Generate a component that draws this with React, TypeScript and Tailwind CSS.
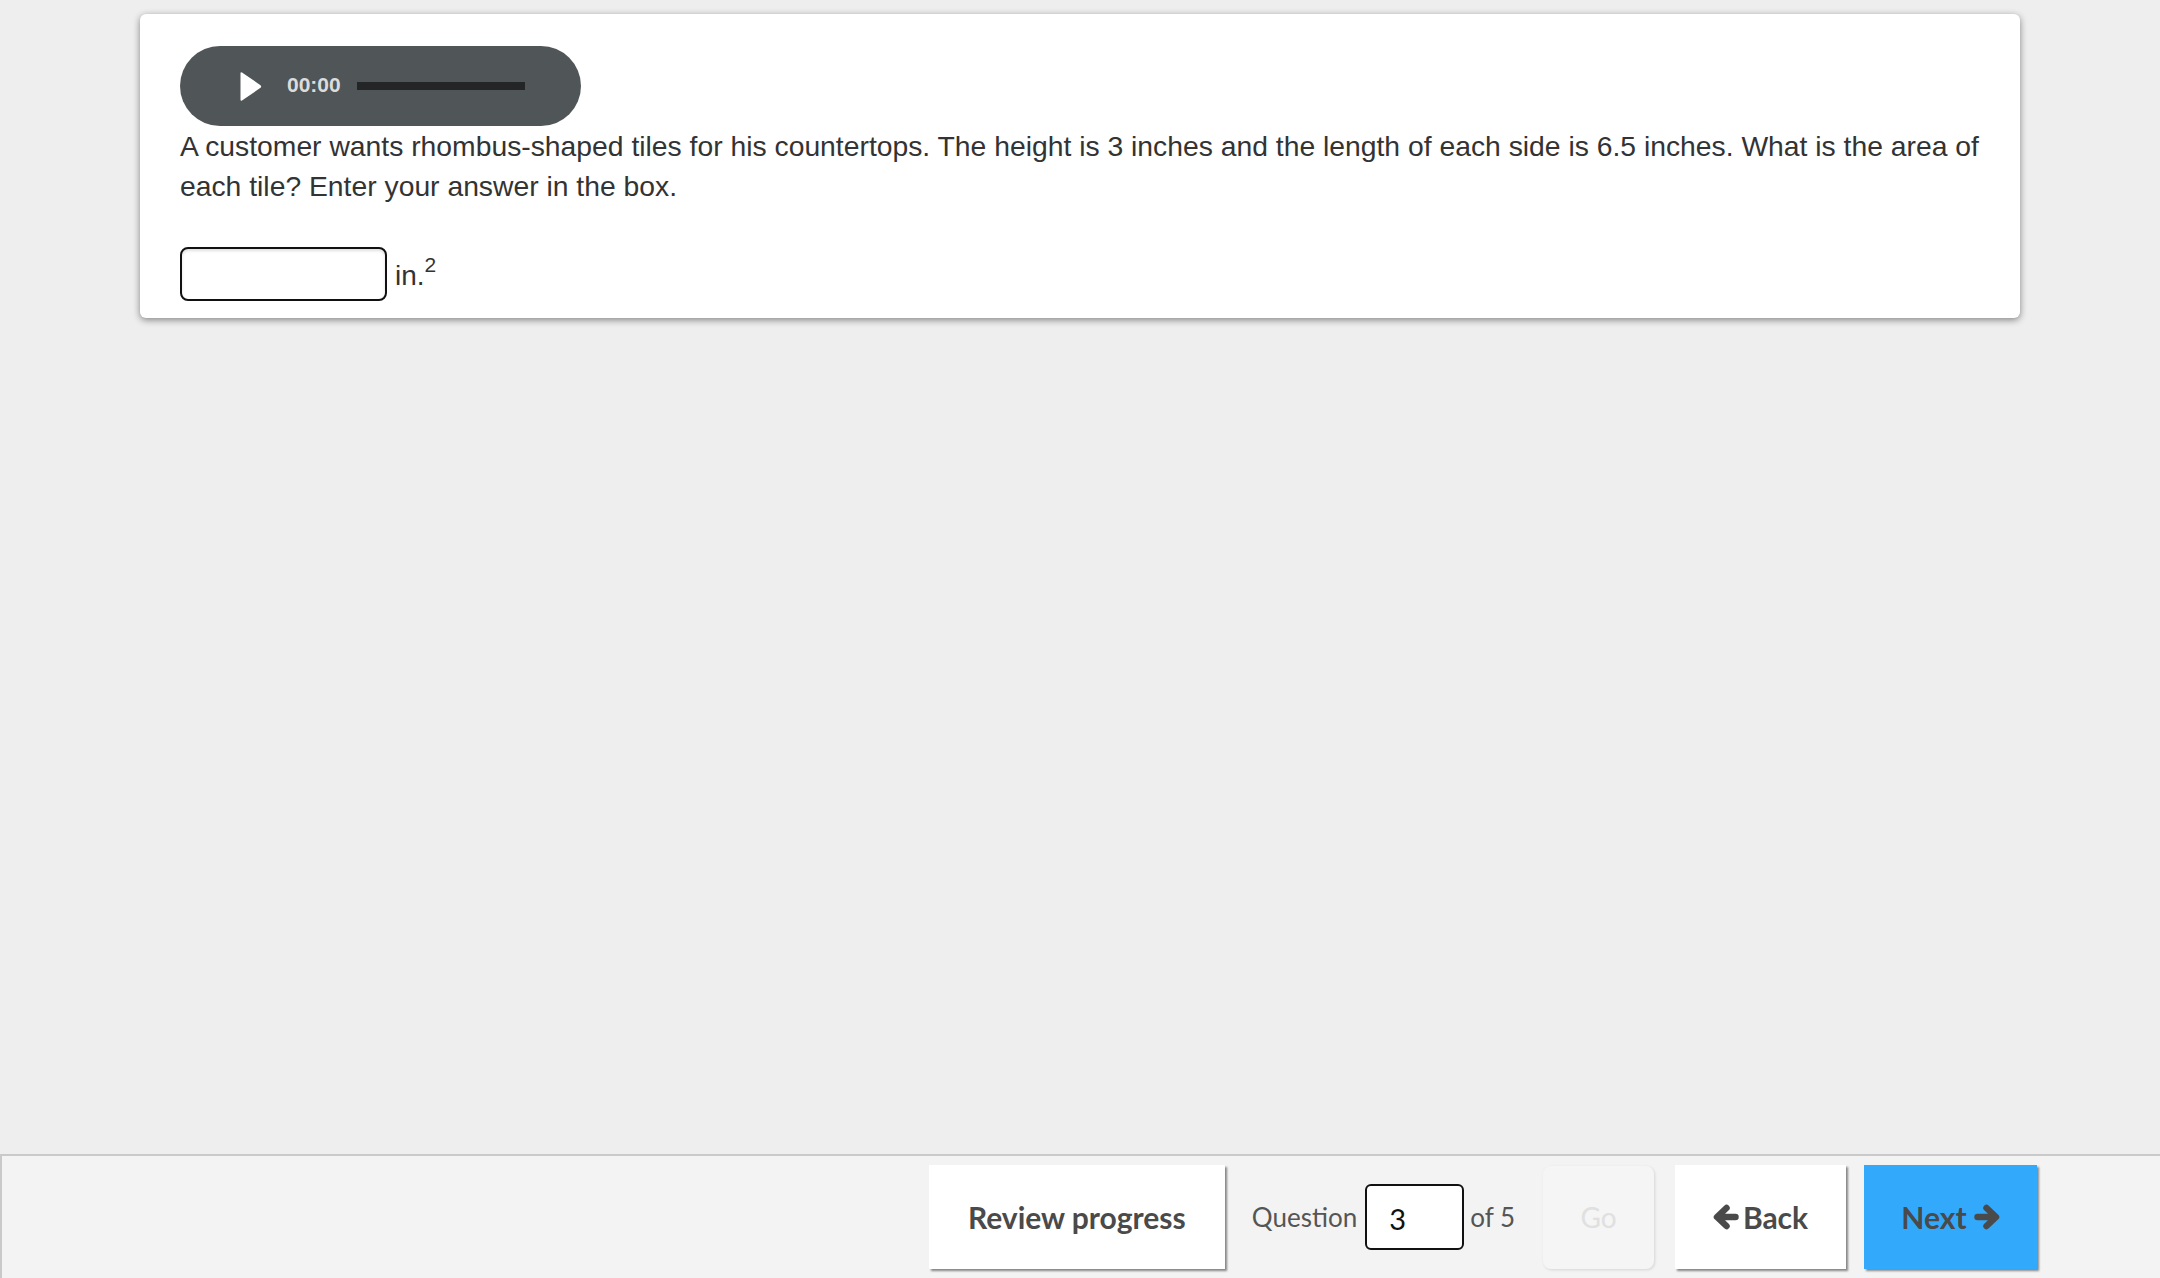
import React, { useState } from 'react';

const AudioPlayer: React.FC = () => (
  <div className="flex items-center w-[401px] h-[80px] rounded-full bg-[#505557]">
    <svg width="22" height="33" viewBox="0 0 22 33" className="ml-[60px]">
      <path d="M2 2.5 L20.5 15.2 Q21.8 16.5 20.5 17.8 L2 30.5 Q0.5 31.4 0.5 29.5 L0.5 3.5 Q0.5 1.6 2 2.5 Z" fill="#ffffff" />
    </svg>
    <span className="ml-[25px] -mt-[3px] text-[21px] font-bold text-[#dcdcdc] font-['Liberation_Sans',Arial,sans-serif] leading-none">
      00:00
    </span>
    <div className="ml-[16px] -mt-[1px] w-[168px] h-[8px] bg-[#232527]" />
  </div>
);

// thick, round-ended arrow like the old font-awesome glyph
const Arrow: React.FC<{ dir: 'left' | 'right' }> = ({ dir }) => (
  <svg width="26" height="26" viewBox="0 0 26 26" className={dir === 'right' ? 'rotate-180' : ''}>
    <path
      d="M13.5 4 L4 13 L13.5 22 M4.5 13 L22.5 13"
      fill="none"
      stroke="currentColor"
      strokeWidth="6.5"
      strokeLinecap="round"
      strokeLinejoin="round"
    />
  </svg>
);

const QuestionCard: React.FC = () => {
  const [answer, setAnswer] = useState('');

  return (
    <div className="mx-[140px] mt-[14px] bg-white rounded-[6px] shadow-[0_2px_7px_rgba(0,0,0,0.45)] pt-[32px] px-[40px] pb-[17px]">
      <AudioPlayer />
      <p className="text-[28.3px] leading-[40px] text-[#333333] font-['Liberation_Sans',Arial,sans-serif]">
        A customer wants rhombus-shaped tiles for his countertops. The height is 3 inches and the length of each side is 6.5 inches. What is the area of each tile? Enter your answer in the box.
      </p>
      <div className="mt-[41px] flex items-center">
        <input
          type="text"
          value={answer}
          onChange={(e) => setAnswer(e.target.value)}
          className="w-[207px] h-[54px] border-2 border-[#111111] rounded-[8px] bg-white shadow-[inset_0_2px_3px_rgba(0,0,0,0.12)] outline-none px-2 text-[26px]"
        />
        <span className="ml-[8px] mt-[4px] text-[28px] text-[#333333] font-['Liberation_Sans',Arial,sans-serif] leading-none">
          in.<sup className="text-[21px] relative -top-[13px] align-baseline">2</sup>
        </span>
      </div>
    </div>
  );
};

const Footer: React.FC = () => (
  <div className="h-[124px] bg-[#f3f3f3] border-t-2 border-l-2 border-[#c9c9c9] flex items-center justify-end pr-[123px] font-['Lato',sans-serif]">
    <button className="w-[296px] h-[104px] bg-white shadow-[2px_2px_2px_rgba(0,0,0,0.45)] text-[30px] font-bold text-[#4a4a4a]">
      Review progress
    </button>
    <span className="ml-[27px] text-[26px] text-[#555555]">Question</span>
    <div className="ml-[8px] w-[99px] h-[66px] border-2 border-[#111111] rounded-[6px] bg-white flex items-center pl-[22px] pt-[4px] text-[29px] text-[#111111]">
      3
    </div>
    <span className="ml-[6px] text-[26px] text-[#555555]">of 5</span>
    <button className="ml-[28px] w-[111px] h-[103px] rounded-[8px] bg-[#f5f5f5] shadow-[1px_1px_3px_rgba(0,0,0,0.12)] text-[28px] text-[#e0e0e0]">
      Go
    </button>
    <button className="ml-[21px] w-[171px] h-[104px] bg-white shadow-[2px_2px_2px_rgba(0,0,0,0.45)] flex items-center justify-center gap-[4px] text-[30px] font-bold text-[#4a4a4a]">
      <Arrow dir="left" />
      Back
    </button>
    <button className="ml-[18px] w-[173px] h-[104px] bg-[#33a9fc] shadow-[2px_2px_2px_rgba(0,0,0,0.45)] flex items-center justify-center gap-[7px] text-[30px] font-bold text-[#4a4a4a]">
      Next
      <Arrow dir="right" />
    </button>
  </div>
);

export default function App() {
  return (
    <div className="w-[2160px] h-[1278px] flex flex-col bg-[#eeeeee] overflow-hidden">
      <div className="flex-1">
        <QuestionCard />
      </div>
      <Footer />
    </div>
  );
}
